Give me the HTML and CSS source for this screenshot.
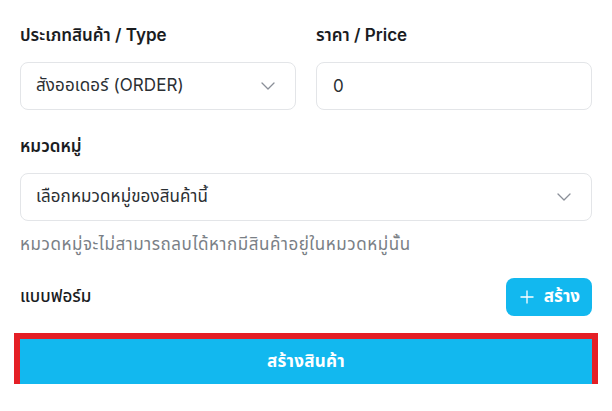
FILE: index.html
```html
<!DOCTYPE html>
<html lang="th">
<head>
<meta charset="utf-8">
<title>สร้างสินค้า</title>
<link rel="stylesheet" href="styles.css">
</head>
<body>
<form class="form">
  <div class="row-2">
    <div class="field">
      <label class="label">ประเภทสินค้า / Type</label>
      <div class="control select">
        <span class="value">สังออเดอร์ (ORDER)</span>
        <svg class="chev" width="14" height="8" viewBox="0 0 14 8"><path d="M1 1l6 6 6-6" fill="none" stroke="#8a8f98" stroke-width="1.3" stroke-linecap="round" stroke-linejoin="round"/></svg>
      </div>
    </div>
    <div class="field">
      <label class="label">ราคา / Price</label>
      <input class="control input" type="text" value="0">
    </div>
  </div>

  <div class="field gap-top">
    <label class="label">หมวดหมู่</label>
    <div class="control select">
      <span class="value">เลือกหมวดหมู่ของสินค้านี้</span>
      <svg class="chev" width="14" height="8" viewBox="0 0 14 8"><path d="M1 1l6 6 6-6" fill="none" stroke="#8a8f98" stroke-width="1.3" stroke-linecap="round" stroke-linejoin="round"/></svg>
    </div>
    <p class="help">หมวดหมู่จะไม่สามารถลบได้หากมีสินค้าอยู่ในหมวดหมู่นั้น</p>
  </div>

  <div class="form-row">
    <span class="label-plain">แบบฟอร์ม</span>
    <button type="button" class="btn-small">
      <svg width="14" height="14" viewBox="0 0 14 14"><path d="M7 0.5v13M0.5 7h13" stroke="#fff" stroke-width="1.3" fill="none"/></svg>
      <span>สร้าง</span>
    </button>
  </div>

  <button type="button" class="btn-primary">สร้างสินค้า</button>
</form>
</body>
</html>
```

FILE: styles.css
```css
* { box-sizing: border-box; }
html, body { margin: 0; padding: 0; background: #fff; }
body {
  font-family: Inter, "Noto Sans Thai", "Noto Sans Thai UI", "Noto Sans", sans-serif;
  color: #1f2328;
  font-size: 17px;
}
.form {
  display: flex;
  flex-direction: column;
  padding: 23px 20px 0 20px;
}
.row-2 {
  display: grid;
  grid-template-columns: 1fr 1fr;
  column-gap: 20px;
}
.field {
  display: flex;
  flex-direction: column;
}
.gap-top { margin-top: 24px; }
.label {
  font-weight: 600;
  font-size: 17px;
  line-height: 24px;
  color: #1a1c1f;
  margin-bottom: 15px;
}
.control {
  height: 48px;
  border: 1px solid #e3e5e8;
  border-radius: 8px;
  background: #fff;
  font-family: inherit;
  font-size: 17px;
  color: #2b2f33;
}
.select {
  display: flex;
  align-items: center;
  justify-content: space-between;
  padding: 0 20px 0 15px;
  letter-spacing: 0.1px;
}
.input {
  width: 100%;
  padding: 0 16px;
  outline: none;
}
.help {
  margin: 11px 0 0 0;
  font-size: 17px;
  line-height: 24px;
  color: #7a7f86;
  letter-spacing: 0.55px;
}
.form-row {
  margin-top: 22px;
  display: flex;
  align-items: center;
  justify-content: space-between;
}
.label-plain {
  font-size: 17px;
  font-weight: 500;
  color: #1a1c1f;
}
.btn-small {
  display: flex;
  align-items: center;
  gap: 10px;
  height: 38px;
  padding: 0 12px 0 14px;
  border: 0;
  border-radius: 8px;
  background: #12b8ef;
  color: #fff;
  font-family: inherit;
  font-size: 17px;
  font-weight: 700;
}
.btn-primary {
  margin-top: 23px;
  height: 45px;
  border: 0;
  background: #12b8ef;
  color: #fff;
  font-family: inherit;
  font-size: 17px;
  font-weight: 700;
  letter-spacing: 0.3px;
  outline: 6px solid #e41f26;
}
```
